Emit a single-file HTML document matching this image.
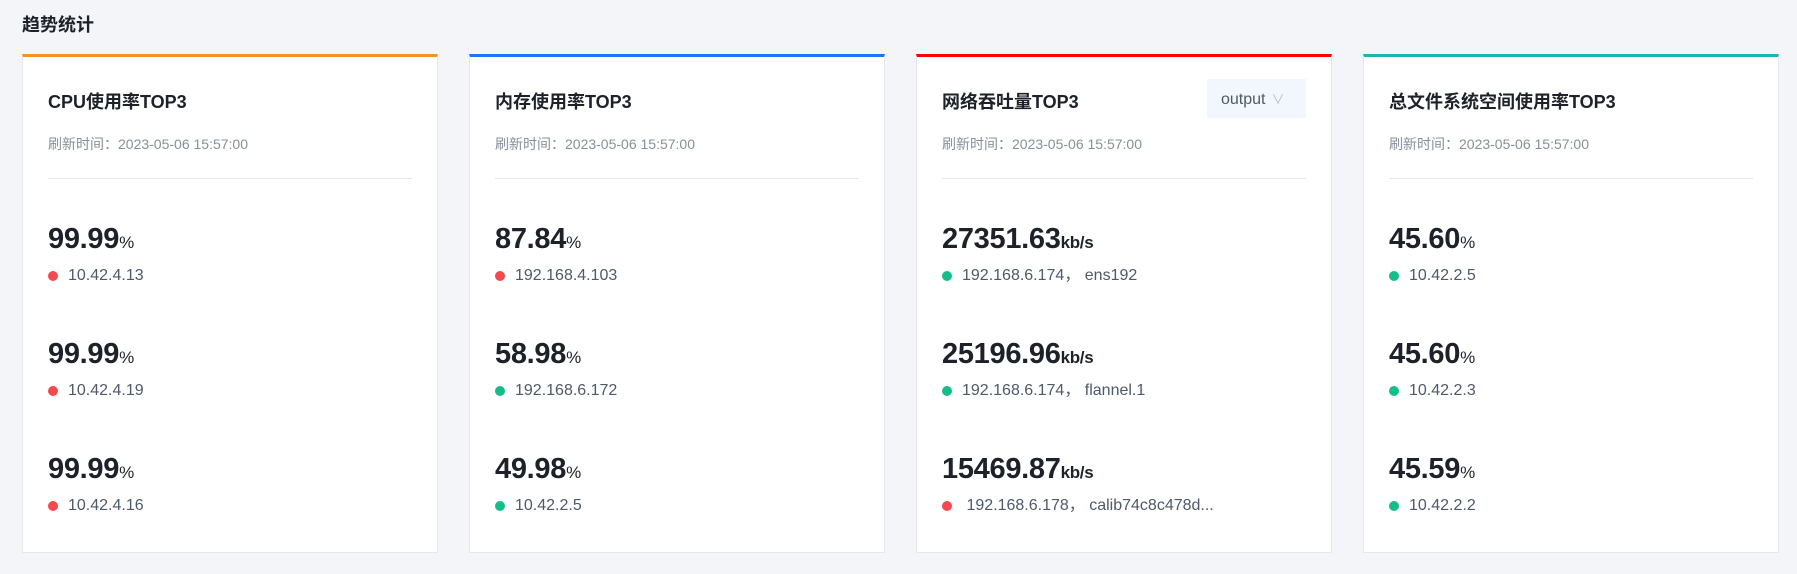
<!DOCTYPE html>
<html><head><meta charset="utf-8"><style>
*{margin:0;padding:0;box-sizing:border-box}
body{width:1797px;height:574px;background:#f3f5f9;font-family:"Liberation Sans","Noto Sans CJK SC",sans-serif;position:relative;overflow:hidden;color:#1d2129}
.h{position:absolute;left:22px;top:11px;font-size:18px;font-weight:bold;color:#1d2129}
.card{position:absolute;top:54px;width:416px;height:499px;background:#fff;border:1px solid #e6e8ee;border-top:3px solid}
.t{position:absolute;left:25px;top:31px;font-size:18px;font-weight:bold;color:#1d2129}
.r{position:absolute;left:25px;top:77px;font-size:14px;color:#86909c}
.d{position:absolute;left:25px;right:25px;top:121px;border-top:1px solid #e5e6eb}
.g{position:absolute;left:25px}
.v{font-size:29px;font-weight:bold;color:#1d2129;line-height:34px;letter-spacing:-0.3px}
.v small{font-size:17px;font-weight:normal}
.ip{font-size:16px;color:#4e5969;margin-top:6px;display:flex;align-items:center;height:20px;line-height:20px;overflow:hidden}
.ip i{display:inline-block;width:10px;height:10px;border-radius:50%;margin-right:10px}
.R{background:#f5484f}.G{background:#13be89}
.sel{position:absolute;left:290px;top:22px;width:99px;height:39px;background:#f2f7fd;font-size:16px;color:#4e5969;padding:10px 0 0 14px}
.sel span{color:#b9bec6;font-size:13px;margin-left:6px}
</style></head><body>
<div class="h">趋势统计</div>

<div class="card" style="left:22px;border-top-color:#f7921e">
<div class="t">CPU使用率TOP3</div><div class="r">刷新时间：2023-05-06 15:57:00</div><div class="d"></div>
<div class="g" style="top:165px"><div class="v">99.99<small>%</small></div><div class="ip"><i class="R"></i>10.42.4.13</div></div>
<div class="g" style="top:280px"><div class="v">99.99<small>%</small></div><div class="ip"><i class="R"></i>10.42.4.19</div></div>
<div class="g" style="top:395px"><div class="v">99.99<small>%</small></div><div class="ip"><i class="R"></i>10.42.4.16</div></div>
</div>

<div class="card" style="left:469px;border-top-color:#1677ff">
<div class="t">内存使用率TOP3</div><div class="r">刷新时间：2023-05-06 15:57:00</div><div class="d"></div>
<div class="g" style="top:165px"><div class="v">87.84<small>%</small></div><div class="ip"><i class="R"></i>192.168.4.103</div></div>
<div class="g" style="top:280px"><div class="v">58.98<small>%</small></div><div class="ip"><i class="G"></i>192.168.6.172</div></div>
<div class="g" style="top:395px"><div class="v">49.98<small>%</small></div><div class="ip"><i class="G"></i>10.42.2.5</div></div>
</div>

<div class="card" style="left:916px;border-top-color:#ff0000">
<div class="t">网络吞吐量TOP3</div><div class="sel">output<span>∨</span></div><div class="r">刷新时间：2023-05-06 15:57:00</div><div class="d"></div>
<div class="g" style="top:165px"><div class="v">27351.63<small style="font-weight:bold">kb/s</small></div><div class="ip"><i class="G"></i>192.168.6.174， ens192</div></div>
<div class="g" style="top:280px"><div class="v">25196.96<small style="font-weight:bold">kb/s</small></div><div class="ip"><i class="G"></i>192.168.6.174， flannel.1</div></div>
<div class="g" style="top:395px"><div class="v">15469.87<small style="font-weight:bold">kb/s</small></div><div class="ip"><i class="R"></i>&nbsp;192.168.6.178， calib74c8c478d...</div></div>
</div>

<div class="card" style="left:1363px;border-top-color:#13b9b9">
<div class="t">总文件系统空间使用率TOP3</div><div class="r">刷新时间：2023-05-06 15:57:00</div><div class="d"></div>
<div class="g" style="top:165px"><div class="v">45.60<small>%</small></div><div class="ip"><i class="G"></i>10.42.2.5</div></div>
<div class="g" style="top:280px"><div class="v">45.60<small>%</small></div><div class="ip"><i class="G"></i>10.42.2.3</div></div>
<div class="g" style="top:395px"><div class="v">45.59<small>%</small></div><div class="ip"><i class="G"></i>10.42.2.2</div></div>
</div>
</body></html>
